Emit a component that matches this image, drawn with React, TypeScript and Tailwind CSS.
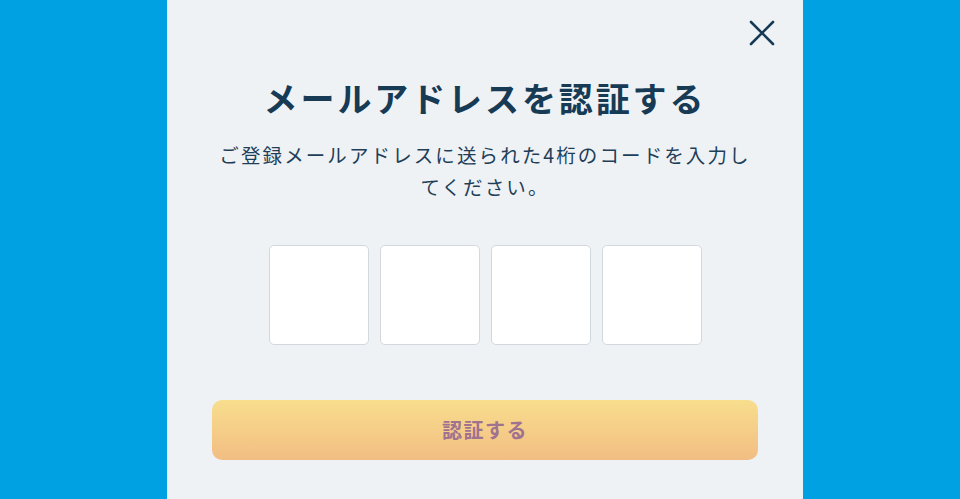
export default function App() {
  const digits = [0, 1, 2, 3]

  return (
    <div className="flex h-[499px] w-full justify-center overflow-hidden bg-[#00a1e2] pl-[10px] font-['Noto_Sans_CJK_JP','Noto_Sans',sans-serif]">
      <div className="relative flex w-[636px] flex-col items-center bg-[#eff2f5] px-[45px] pt-[74px]">
        {/* close */}
        <button className="absolute right-[28px] top-[20px] text-[#173a55]" aria-label="close">
          <svg width="26" height="26" viewBox="0 0 26 26" fill="none" stroke="currentColor" strokeWidth="2.6" strokeLinecap="round">
            <path d="M2 2L24 24M24 2L2 24" />
          </svg>
        </button>

        <h1 className="text-[34px] font-bold leading-[48px] tracking-[2.9px] text-[#173a55]">
          メールアドレスを認証する
        </h1>

        <p className="mt-[17px] text-center text-[19.5px] leading-[32px] tracking-[2.1px] text-[#1f3f58]">
          ご登録メールアドレスに送られた4桁のコードを入力し
          <br />
          てください。
        </p>

        <div className="mt-[42px] flex gap-[11px]">
          {digits.map((d) => (
            <input
              key={d}
              maxLength={1}
              className="h-[100px] w-[100px] rounded-[5px] border border-[#d3d8de] bg-white text-center text-3xl outline-none"
            />
          ))}
        </div>

        <button className="mt-[55px] flex h-[60px] w-full items-center justify-center rounded-[10px] bg-gradient-to-b from-[#f8de8d] to-[#f2bd83] text-[20px] font-bold tracking-[1.5px] text-[#9f7290]">
          認証する
        </button>
      </div>
    </div>
  )
}
